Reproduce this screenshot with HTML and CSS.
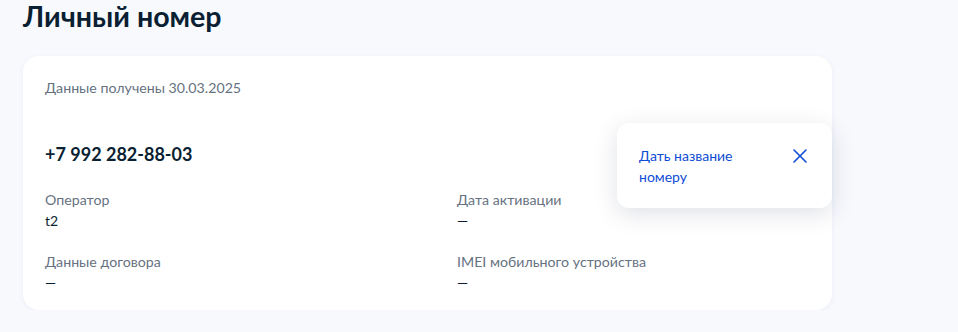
FILE: index.html
```html
<!DOCTYPE html>
<html lang="ru">
<head>
<meta charset="utf-8">
<link rel="stylesheet" href="styles.css">
</head>
<body>
<div class="page">
  <h1 class="title">Личный номер</h1>
  <div class="card">
    <div class="date">Данные получены 30.03.2025</div>
    <div class="phone">+7 992 282-88-03</div>
    <div class="grid">
      <div class="field">
        <div class="label">Оператор</div>
        <div class="value">t2</div>
      </div>
      <div class="field">
        <div class="label">Дата активации</div>
        <div class="value">—</div>
      </div>
      <div class="field">
        <div class="label">Данные договора</div>
        <div class="value">—</div>
      </div>
      <div class="field">
        <div class="label">IMEI мобильного устройства</div>
        <div class="value">—</div>
      </div>
    </div>
    <div class="popup">
      <span class="popup-text">Дать название номеру</span>
      <svg class="close" width="14" height="14" viewBox="0 0 14 14" fill="none">
        <path d="M1 1 L13 13 M13 1 L1 13" stroke="#0d4cd3" stroke-width="1.6" stroke-linecap="round"/>
      </svg>
    </div>
  </div>
</div>
</body>
</html>
```

FILE: styles.css
```css
* { box-sizing: border-box; }
html, body {
  margin: 0;
  padding: 0;
  background: #f7f9fd;
  font-family: Lato, "Open Sans", sans-serif;
  color: #0b1f33;
}
.page {
  padding: 0 0 0 23px;
  width: 832px;
}
.title {
  margin: 0;
  font-size: 28.6px;
  line-height: 32px;
  font-weight: 700;
  color: #0b1f33;
}
.card {
  position: relative;
  margin-top: 24px;
  background: #ffffff;
  border-radius: 16px;
  box-shadow: 0 1px 4px rgba(232, 236, 245, 0.9);
  padding: 22px 22px 18px 22px;
  height: 254px;
}
.date {
  font-size: 14.2px;
  line-height: 20px;
  color: #66727f;
}
.phone {
  margin-top: 44px;
  font-size: 18px;
  line-height: 24px;
  font-weight: 700;
  color: #0b1f33;
}
.grid {
  margin-top: 24px;
  display: grid;
  grid-template-columns: 412px 1fr;
  row-gap: 21px;
}
.label {
  font-size: 14.2px;
  line-height: 20px;
  color: #66727f;
}
.value {
  font-size: 14px;
  line-height: 21px;
  color: #0b1f33;
}
.popup {
  position: absolute;
  left: 594px;
  top: 67px;
  width: 215px;
  height: 85px;
  background: #ffffff;
  border-radius: 12px;
  box-shadow: 0 6px 24px rgba(0, 20, 60, 0.13);
  padding: 22px 22px 0 22px;
  display: flex;
  justify-content: space-between;
  align-items: flex-start;
}
.popup-text {
  width: 120px;
  font-size: 14px;
  line-height: 21px;
  color: #0d4cd3;
}
.close {
  margin-top: 4px;
  margin-right: 3px;
}
```
